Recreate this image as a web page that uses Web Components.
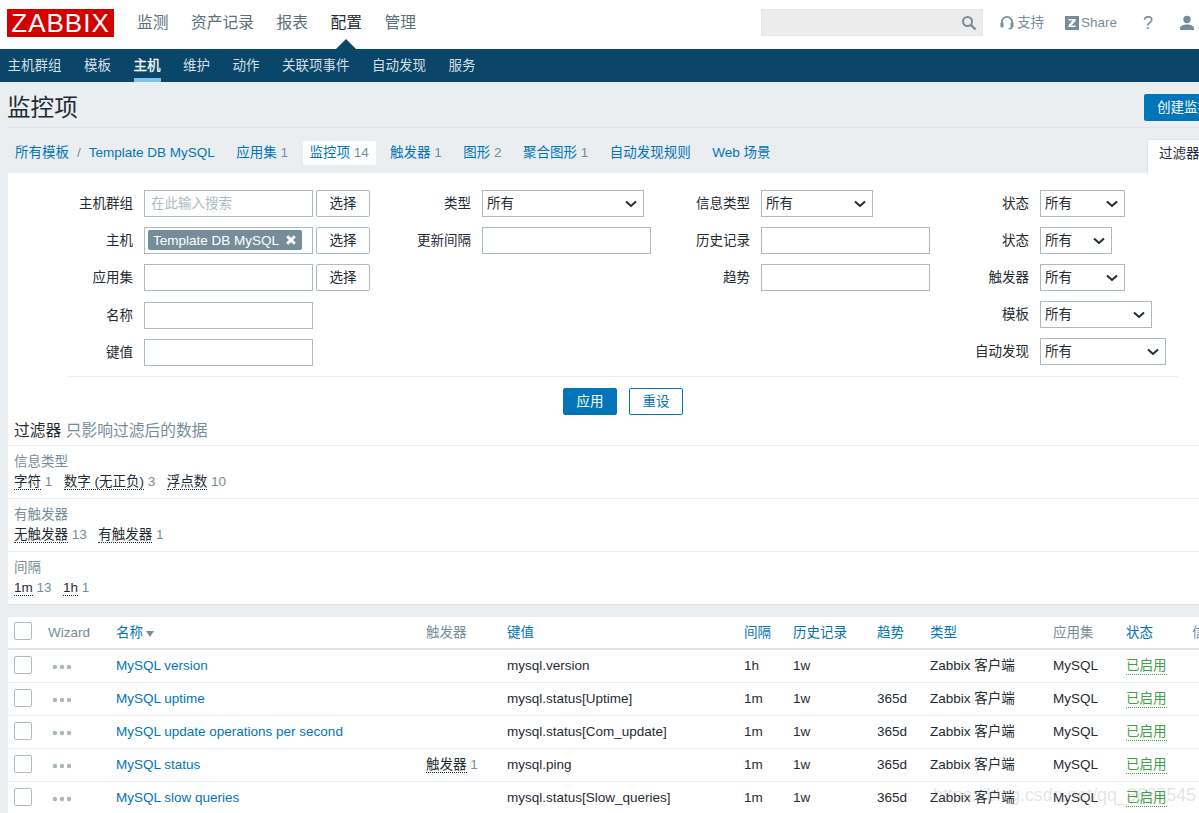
<!DOCTYPE html>
<html lang="zh">
<head>
<meta charset="utf-8">
<title>监控项</title>
<style>
  html, body { margin: 0; padding: 0; height: 813px; overflow: hidden; background: #ebeef0; }
  body { font: 13.5px "Liberation Sans", "Noto Sans CJK SC", sans-serif; color: #1f2c33; width: 1280px; }
</style>
</head>
<body>
<zbx-topnav></zbx-topnav>
<zbx-subnav></zbx-subnav>
<zbx-pagehead></zbx-pagehead>
<zbx-tabs></zbx-tabs>
<zbx-filter></zbx-filter>
<zbx-subfilter></zbx-subfilter>
<zbx-table></zbx-table>

<script>
const FIELD_CSS = `
  .box { box-sizing: border-box; height: 27px; border: 1px solid #acbbc2; background: #fff; }
  .btn { box-sizing: border-box; height: 27px; width: 54px; border: 1px solid #acbbc2; border-radius: 2px; background: #fff;
         display: flex; align-items: center; justify-content: center; color: #1f2c33; line-height: 16px; }
`;

class ZbxTopnav extends HTMLElement {
  constructor() {
    super();
    this.attachShadow({ mode: 'open' });
    this.shadowRoot.innerHTML = `
      <style>
        :host { display: flex; align-items: flex-start; height: 49px; background: #fff; position: relative; }
        .logo { margin: 9px 0 0 7px; width: 107px; height: 28px; background: #d40000; color: #fff; font-size: 26px; line-height: 29px;
                text-align: center; letter-spacing: 1px; overflow: hidden; white-space: nowrap; }
        nav { display: flex; gap: 22.5px; margin: 12px 0 0 23px; font-size: 15.75px; line-height: 22px; color: #5d6f79; }
        nav span { position: relative; }
        nav .on { color: #1f2c33; }
        nav .on::after { content: ""; position: absolute; left: 50%; bottom: -15px; margin-left: -10px; border: 10px solid transparent;
                         border-top: 0; border-bottom: 10px solid #0a466a; }
        .right { width: 1199px; position: absolute; left: 0; top: 0; display: flex; justify-content: flex-end; pointer-events: none; }
        .search { box-sizing: border-box; width: 222px; height: 27px; margin: 9px 0 0 0; background: #ececec; border: 1px solid #e5e5e5;
                  display: flex; align-items: center; justify-content: flex-end; padding-right: 5px; }
        .tools { display: flex; align-items: center; height: 27px; margin: 9px 4px 0 17px; color: #768d99; font-size: 13.5px; line-height: 16px; }
        .tools span { display: inline-flex; align-items: center; }
        .tools .hs { gap: 3px; }
        .tools .sh { margin-left: 21px; gap: 2px; }
        .tools .hp { margin-left: 26px; font-size: 18px; }
        .tools .us { margin-left: 26px; }
      </style>
      <div class="logo">ZABBIX</div>
      <nav><span>监测</span><span>资产记录</span><span>报表</span><span class="on">配置</span><span>管理</span></nav>
      <div class="right">
        <div class="search">
          <svg width="16" height="16" viewBox="0 0 16 16"><circle cx="6.5" cy="6.5" r="4.5" fill="none" stroke="#768d99" stroke-width="2"/><path d="M10 10l4.5 4.5" stroke="#768d99" stroke-width="2.4"/></svg>
        </div>
        <div class="tools">
          <span class="hs"><svg width="14" height="16" viewBox="0 0 14 16"><path d="M1.8 10V7a5.2 5.2 0 0 1 10.4 0v3" fill="none" stroke="#768d99" stroke-width="1.8"/><rect x="0.5" y="7.5" width="3" height="5" rx="1" fill="#768d99"/><rect x="10.5" y="7.5" width="3" height="5" rx="1" fill="#768d99"/><path d="M11.5 12v1.5H8.5" fill="none" stroke="#768d99" stroke-width="1.3"/></svg>支持</span>
          <span class="sh"><svg width="14" height="14" viewBox="0 0 14 14"><rect width="14" height="14" fill="#768d99"/><path d="M3.5 3h7v2L6.3 9.5h4.2V11h-7V9l4.2-4.5H3.500z" fill="#fff"/></svg>Share</span>
          <span class="hp">?</span>
          <span class="us"><svg width="16" height="16" viewBox="0 0 16 16"><circle cx="8" cy="4.500" r="3.700" fill="#768d99"/><path d="M1 15v-1.500C1 10.500 4.500 9.500 8 9.500s7 1 7 4V15z" fill="#768d99"/></svg></span>
        </div>
      </div>
    `;
  }
}

class ZbxSubnav extends HTMLElement {
  constructor() {
    super();
    this.attachShadow({ mode: 'open' });
    this.shadowRoot.innerHTML = `
      <style>
        :host { display: flex; gap: 22.5px; height: 33px; background: #0a466a; padding-left: 7.5px; color: #d5dfe5; font-size: 13.5px; line-height: 33px; }
        span { display: block; box-sizing: border-box; height: 33px; }
        .on { color: #fff; border-bottom: 4px solid #7fc4ec; -webkit-text-stroke: 0.3px #fff; }
      </style>
      <span>主机群组</span><span>模板</span><span class="on">主机</span><span>维护</span><span>动作</span><span>关联项事件</span><span>自动发现</span><span>服务</span>
    `;
  }
}

class ZbxPagehead extends HTMLElement {
  constructor() {
    super();
    this.attachShadow({ mode: 'open' });
    this.shadowRoot.innerHTML = `
      <style>
        :host { display: flex; justify-content: space-between; align-items: flex-start; box-sizing: border-box; height: 46px;
                margin-left: 8px; border-bottom: 1px solid #dfe4e7; }
        h1 { margin: 9px 0 0 -1px; font-size: 23.6px; line-height: 34px; font-weight: normal; color: #1f2c33; }
        .wrap { width: 1191px; display: flex; justify-content: space-between; }
        button { all: unset; box-sizing: border-box; height: 27px; width: 120px; margin-top: 12px; padding-left: 13px; background: #0275b8; color: #fff; border-radius: 2px;
                 font: inherit; line-height: 25px; margin-right: -65px; white-space: nowrap; }
      </style>
      <div class="wrap"><h1>监控项</h1><button>创建监控项</button></div>
    `;
  }
}

class ZbxTabs extends HTMLElement {
  constructor() {
    super();
    this.attachShadow({ mode: 'open' });
    this.shadowRoot.innerHTML = `
      <style>
        :host { display: block; width: 1191px; box-sizing: border-box; height: 45px; margin-left: 8px; padding-top: 13px; position: relative; color: #0275b8; }
        ul { display: flex; list-style: none; margin: 0; padding: 0 0 0 7px; align-items: center; height: 24px; line-height: 22px; white-space: nowrap; }
        li { margin-right: 21.5px; }
        li i { font-style: normal; color: #768d99; }
        li.crumb { margin-right: 0; }
        li.sep { margin: 0 8px 0 8px; color: #768d99; }
        li.sel { background: #fff; box-sizing: border-box; height: 24px; padding: 1px 7px 0; margin: 0 14px 0 -7px; border-radius: 2px; box-shadow: 0 0 1px #dfe4e7; }
        .flt { position: absolute; left: 1139px; top: 11px; box-sizing: border-box; width: 80px; height: 35px; background: #fff; border: 1px solid #dfe4e7;
               border-bottom: 0; border-radius: 2px 0 0 0; padding: 3px 0 0 11px; color: #1f2c33; line-height: 22px; white-space: nowrap; }
      </style>
      <ul>
        <li class="crumb">所有模板</li><li class="sep">/</li><li class="tpl">Template DB MySQL</li>
        <li>应用集 <i>1</i></li>
        <li class="sel">监控项 <i>14</i></li>
        <li>触发器 <i>1</i></li>
        <li>图形 <i>2</i></li>
        <li>聚合图形 <i>1</i></li>
        <li>自动发现规则</li>
        <li>Web 场景</li>
      </ul>
      <div class="flt">过滤器</div>
    `;
  }
}

class ZbxSelect extends HTMLElement {
  constructor() {
    super();
    this.attachShadow({ mode: 'open' });
    this.shadowRoot.innerHTML = `
      <style>
        ${FIELD_CSS}
        :host { display: block; line-height: 16px; }
        .box { display: flex; align-items: center; justify-content: space-between; padding: 0 5px 0 4px; width: var(--w, 100px); }
        svg { display: block; }
      </style>
      <div class="box"><slot>所有</slot><svg width="14" height="8" viewBox="0 0 14 8"><path d="M2 1.500l5 4.500 5-4.500" fill="none" stroke="#1f2c33" stroke-width="2"/></svg></div>
    `;
  }
  connectedCallback() {
    this.style.setProperty('--w', this.getAttribute('w') + 'px');
  }
}

class ZbxRow extends HTMLElement {
  static get observedAttributes() { return ['label', 'lw']; }
  constructor() {
    super();
    this.attachShadow({ mode: 'open' });
    this.shadowRoot.innerHTML = `
      <style>
        :host { display: flex; align-items: center; height: 27px; gap: 10px; }
        label { box-sizing: border-box; padding-right: 1px; line-height: 16px; text-align: right; flex: none; white-space: nowrap; }
        ::slotted(*) { flex: none; }
      </style>
      <label></label><slot></slot>
    `;
  }
  connectedCallback() { this.render(); }
  attributeChangedCallback() { this.render(); }
  render() {
    const l = this.shadowRoot.querySelector('label');
    l.textContent = this.getAttribute('label') || '';
    l.style.width = (this.getAttribute('lw') || 0) + 'px';
  }
}

class ZbxFilter extends HTMLElement {
  constructor() {
    super();
    this.attachShadow({ mode: 'open' });
    this.shadowRoot.innerHTML = `
      <style>
        ${FIELD_CSS}
        :host { display: block; box-sizing: border-box; margin-left: 8px; width: 1191px; height: 242px; padding-top: 17px; background: #fff; }
        .cols { display: flex; height: 186px; }
        .col { display: flex; flex-direction: column; gap: 10px; flex: none; }
        .c1 { width: 334px; } .c2 { width: 279px; } .c3 { width: 279px; }
        .c1 zbx-row:nth-child(4) { margin-top: 1px; }
        .in { box-sizing: border-box; height: 27px; width: 169px; border: 1px solid #acbbc2; background: #fff; display: block; padding: 0 6px; font: inherit; color: #1f2c33; border-radius: 0; outline: 0; }
        .in::placeholder { color: #acbbc2; opacity: 1; }
        .pair { display: flex; gap: 3px; }
        .tag { box-sizing: border-box; height: 27px; width: 169px; border: 1px solid #acbbc2; padding: 2px 3px; }
        .tag span { display: inline-flex; align-items: center; justify-content: space-between; width: 154px; height: 20px; box-sizing: border-box; padding: 0 5px; background: #768d99; color: #fff; border-radius: 2px; white-space: nowrap; }
        .rule { height: 1px; margin: 0 21px 0 60px; background: #ebeef0; }
        .acts { display: flex; gap: 12px; padding: 11px 0 0 555px; line-height: 16px; }
        .acts div { box-sizing: border-box; width: 54px; height: 27px; border-radius: 2px; border: 1px solid #0275b8; display: flex; align-items: center; justify-content: center; color: #0275b8; }
        .acts .pri { background: #0275b8; color: #fff; }
      </style>
      <div class="cols">
        <div class="col c1">
          <zbx-row label="主机群组" lw="126"><div class="pair"><input class="in" placeholder="在此输入搜索"><div class="btn">选择</div></div></zbx-row>
          <zbx-row label="主机" lw="126"><div class="pair"><div class="tag"><span>Template DB MySQL<svg width="12" height="12" viewBox="0 0 12 12"><path d="M2.200 2.200l7.600 7.600M9.800 2.200l-7.600 7.600" stroke="#fff" stroke-width="3"/></svg></span></div><div class="btn">选择</div></div></zbx-row>
          <zbx-row label="应用集" lw="126"><div class="pair"><input class="in"><div class="btn">选择</div></div></zbx-row>
          <zbx-row label="名称" lw="126"><input class="in"></zbx-row>
          <zbx-row label="键值" lw="126"><input class="in"></zbx-row>
        </div>
        <div class="col c2">
          <zbx-row label="类型" lw="130"><zbx-select w="162">所有</zbx-select></zbx-row>
          <zbx-row label="更新间隔" lw="130"><input class="in"></zbx-row>
        </div>
        <div class="col c3">
          <zbx-row label="信息类型" lw="130"><zbx-select w="112">所有</zbx-select></zbx-row>
          <zbx-row label="历史记录" lw="130"><input class="in"></zbx-row>
          <zbx-row label="趋势" lw="130"><input class="in"></zbx-row>
        </div>
        <div class="col c4">
          <zbx-row label="状态" lw="130"><zbx-select w="85">所有</zbx-select></zbx-row>
          <zbx-row label="状态" lw="130"><zbx-select w="72">所有</zbx-select></zbx-row>
          <zbx-row label="触发器" lw="130"><zbx-select w="85">所有</zbx-select></zbx-row>
          <zbx-row label="模板" lw="130"><zbx-select w="112">所有</zbx-select></zbx-row>
          <zbx-row label="自动发现" lw="130"><zbx-select w="126">所有</zbx-select></zbx-row>
        </div>
      </div>
      <div class="rule"></div>
      <div class="acts"><div class="pri">应用</div><div>重设</div></div>
    `;
  }
}

class ZbxSubfilter extends HTMLElement {
  constructor() {
    super();
    const groups = [
      ['信息类型', [['字符', 1], ['数字 (无正负)', 3], ['浮点数', 10]]],
      ['有触发器', [['无触发器', 13], ['有触发器', 1]]],
      ['间隔', [['1m', 13], ['1h', 1]]]
    ];
    this.attachShadow({ mode: 'open' });
    this.shadowRoot.innerHTML = `
      <style>
        :host { display: block; margin-left: 8px; width: 1191px; background: #fff; box-shadow: 0 1px 0 #dfe4e7; }
        .head { box-sizing: border-box; height: 31px; padding: 6px 0 0 6px; font-size: 15.75px; line-height: 20px; border-bottom: 1px solid #ebeef0; }
        .head i { font-style: normal; color: #768d99; }
        .grp { box-sizing: border-box; height: 53px; padding: 7px 0 0 6px; border-bottom: 1px solid #ebeef0; line-height: 17px; }
        .grp:last-child { border-bottom: 0; height: 52px; }
        .t { color: #768d99; margin-bottom: 3px; }
        .v { display: flex; gap: 11.5px; white-space: nowrap; color: #768d99; }
        .v b { font-weight: normal; color: #1f2c33; border-bottom: 1px dotted #1f2c33; }
      </style>
      <div class="head">过滤器 <i>只影响过滤后的数据</i></div>
      ${groups.map(([t, items]) => `
        <div class="grp"><div class="t">${t}</div><div class="v">${items.map(([n, c]) => `<span><b>${n}</b> ${c}</span>`).join('')}</div></div>
      `).join('')}
    `;
  }
}

class ZbxTable extends HTMLElement {
  constructor() {
    super();
    const rows = [
      ['MySQL version', '', 'mysql.version', '1h', '1w', ''],
      ['MySQL uptime', '', 'mysql.status[Uptime]', '1m', '1w', '365d'],
      ['MySQL update operations per second', '', 'mysql.status[Com_update]', '1m', '1w', '365d'],
      ['MySQL status', 1, 'mysql.ping', '1m', '1w', '365d'],
      ['MySQL slow queries', '', 'mysql.status[Slow_queries]', '1m', '1w', '365d']
    ];
    const cb = '<div class="cb"></div>';
    const dots = '<svg width="20" height="6" viewBox="0 0 20 6"><circle cx="3" cy="3" r="2.200" fill="#a9b6bd"/><circle cx="10" cy="3" r="2.200" fill="#a9b6bd"/><circle cx="17" cy="3" r="2.200" fill="#a9b6bd"/></svg>';
    this.attachShadow({ mode: 'open' });
    this.shadowRoot.innerHTML = `
      <style>
        :host { display: block; position: relative; margin: 12px 0 0 8px; width: 1272px; background: #fff; }
        .r { display: grid; grid-template-columns: 34px 68px 310px 81px 237px 49px 84px 53px 123px 73px 66px 80px; padding: 0 0 2px 6px;
             align-items: center; box-sizing: border-box; height: 33px; border-bottom: 1px solid #ebeef0; white-space: nowrap; line-height: 16px; }
        .r > span, .r > a { padding-top: 2px; }
        .h { height: 34px; border-bottom: 2px solid #dfe4e7; padding-bottom: 2px; color: #768d99; border-top: 1px solid #ebeef0; }
        .h .cb { margin-top: -1px; }
        .h a, .n { color: #0275b8; }
        .cb { box-sizing: border-box; width: 18px; height: 18px; border: 1px solid #acbbc2; border-radius: 2px; background: #fff; }
        .arrow { display: inline-block; margin-left: 3px; border: 4.500px solid transparent; border-top: 6px solid #768d99; border-bottom: 0; vertical-align: 0; }
        .d { padding: 3px 0 0 3.500px; display: flex; align-items: center; }
        .tr b { font-weight: normal; color: #1f2c33; border-bottom: 1px dotted #1f2c33; }
        .tr { color: #768d99; }
        .r > .on { color: #429e47; border-bottom: 1px dotted #429e47; justify-self: start; padding-top: 0; margin-top: 2px; }
        .mark { position: absolute; left: 925px; top: 168px; color: #8d8d8d; opacity: .22; font-size: 17.800px; line-height: 22px; white-space: nowrap; pointer-events: none; }
      </style>
      <div class="r h">
        ${cb}<span>Wizard</span><span><a>名称</a><i class="arrow"></i></span><span>触发器</span><a>键值</a><a>间隔</a><a>历史记录</a><a>趋势</a><a>类型</a><span>应用集</span><a>状态</a><span>信息类型</span>
      </div>
      ${rows.map(r => `
        <div class="r">
          ${cb}<div class="d">${dots}</div><span class="n">${r[0]}</span>
          <span class="tr">${r[1] ? `<b>触发器</b> ${r[1]}` : ''}</span>
          <span>${r[2]}</span><span>${r[3]}</span><span>${r[4]}</span><span>${r[5]}</span>
          <span>Zabbix 客户端</span><span>MySQL</span><span class="on">已启用</span><span></span>
        </div>
      `).join('')}
      <div class="mark">https://blog.csdn.net/qq_3667545</div>
    `;
  }
}

customElements.define('zbx-topnav', ZbxTopnav);
customElements.define('zbx-subnav', ZbxSubnav);
customElements.define('zbx-pagehead', ZbxPagehead);
customElements.define('zbx-tabs', ZbxTabs);
customElements.define('zbx-select', ZbxSelect);
customElements.define('zbx-row', ZbxRow);
customElements.define('zbx-filter', ZbxFilter);
customElements.define('zbx-subfilter', ZbxSubfilter);
customElements.define('zbx-table', ZbxTable);
</script>
</body>
</html>
